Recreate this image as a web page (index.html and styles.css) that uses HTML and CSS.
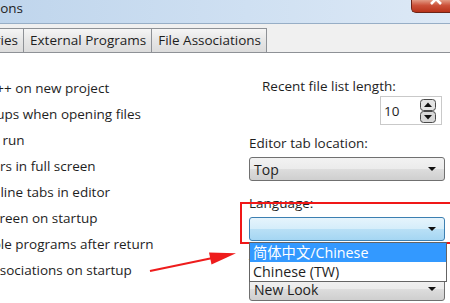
FILE: index.html
```html
<!DOCTYPE html>
<html lang="en">
<head>
    <meta charset="UTF-8">
    <title>Environment Options</title>
    <link rel="stylesheet" href="styles.css">
</head>
<body>

    <div class="window">
        <div class="titlebar">
            <div class="title"><span>Environment Options</span></div>
            <div class="close">
                <svg width="38" height="12" viewBox="0 0 38 12">
                    <path d="M19 -6 L29 4 M29 -6 L19 4" stroke="#fff" stroke-width="2.6" fill="none"/>
                </svg>
            </div>
        </div>

        <div class="tabs">
            <div class="tab-clip"><div class="tab">Directories</div></div>
            <div class="tab">External Programs</div>
            <div class="tab">File Associations</div>
        </div>

        <div class="page">
            <!-- левая колонка с флажками (обрезана скриншотом) -->
            <div class="checks">
                <ul>
                    <li>Default to C++ on new project</li>
                    <li>Create backups when opening files</li>
                    <li>Minimize on run</li>
                    <li>Show toolbars in full screen</li>
                    <li>Enable multiline tabs in editor</li>
                    <li class="wide">Show splash screen on startup</li>
                    <li>Pause console programs after return</li>
                    <li>Check file associations on startup</li>
                </ul>
            </div>

            <div class="side">
                <div class="label indent">Recent file list length:</div>
                <div class="spin">
                    <span>10</span>
                    <svg class="spin-btns" width="16" height="24" viewBox="0 0 16 24">
                        <rect x="0.5" y="0.5" width="15" height="11" rx="3" fill="#e4e4e4" stroke="#4a4a4a"/>
                        <rect x="0.5" y="12.5" width="15" height="11" rx="3" fill="#d8d8d8" stroke="#4a4a4a"/>
                        <path d="M4 8 L8 3.5 L12 8 Z" fill="#111"/>
                        <path d="M4 16 L8 20.5 L12 16 Z" fill="#111"/>
                    </svg>
                </div>

                <div class="label gap">Editor tab location:</div>
                <div class="combo">
                    <span>Top</span>
                    <i class="caret"></i>
                </div>

                <div class="label gap-big">Language:</div>
                <div class="combo-wrap">
                    <div class="combo active">
                        <span></span>
                        <i class="caret"></i>
                    </div>
                    <ul class="droplist">
                        <li class="selected">简体中文/Chinese</li>
                        <li>Chinese (TW)</li>
                    </ul>
                </div>

                <div class="label gap-big">Theme:</div>
                <div class="combo">
                    <span>New Look</span>
                    <i class="caret"></i>
                </div>
            </div>
        </div>
    </div>

    <!-- красная рамка и стрелка поверх окна -->
    <div class="callout"></div>
    <svg class="arrow" width="450" height="303" viewBox="0 0 450 303">
        <line x1="150" y1="271" x2="215" y2="257.5" stroke="#ee1c1c" stroke-width="2.2"/>
        <path d="M236 253.2 L209 252.5 L211.5 264.5 Z" fill="#ee1c1c"/>
    </svg>

</body>
</html>
```

FILE: styles.css
```css
body {
    margin: 0;
    padding: 0;
    width: 450px;
    height: 303px;
    overflow: hidden;
    position: relative;
    font-family: "Open Sans", "Noto Sans", sans-serif;
    font-size: 13.5px;
    color: #1e1e1e;
    background: #fff;
}

.window {
    display: flex;
    flex-direction: column;
    height: 303px;
    background: #f0f0f0;
}

/* Заголовок окна */
.titlebar {
    height: 23px;
    display: flex;
    align-items: flex-start;
    background: linear-gradient(to right, #bfd5ec, #cfe0f2 55%, #dde9f6);
    border-bottom: 1px solid #97aec6;
}

.title {
    width: 23px;
    display: flex;
    justify-content: flex-end;
    overflow: hidden;
    white-space: nowrap;
    line-height: 17px;
}

.close {
    margin-left: auto;
    width: 38px;
    height: 12px;
    border: 1px solid #6d2417;
    border-top: none;
    border-right: none;
    border-radius: 0 0 0 5px;
    background: linear-gradient(#e29a84, #cc523a 45%, #b8331a);
    overflow: hidden;
}

.close svg {
    display: block;
}

/* Вкладки */
.tabs {
    height: 28px;
    display: flex;
    align-items: flex-end;
}

.tab-clip {
    width: 23px;
    display: flex;
    justify-content: flex-end;
    overflow: hidden;
}

.tab {
    height: 23px;
    line-height: 23px;
    padding: 0 5px 0 6px;
    white-space: nowrap;
    background: linear-gradient(#f5f5f5, #e6e6e6 50%, #dcdcdc);
    border: 1px solid #8e9196;
    border-bottom: none;
    margin-right: -1px;
}

.page {
    flex: 1;
    display: flex;
    background: #fff;
    border-top: 1px solid #8e9196;
}

/* Флажки слева */
.checks {
    width: 249px;
    overflow: hidden;
    padding-top: 22px;
}

.checks ul {
    list-style: none;
    margin: 0 0 0 -78px;
    padding: 0;
    white-space: nowrap;
}

.checks li {
    height: 26px;
    line-height: 26px;
}

.checks li.wide {
    text-indent: -17px; /* в оригинале надпись шире */
}

/* Правая колонка */
.side {
    width: 196px;
    padding-top: 25px;
}

.label {
    line-height: 16px;
    white-space: nowrap;
}

.indent {
    padding-left: 13px;
}

.gap {
    margin-top: 10px;
}

.gap-big {
    margin-top: 14px;
}

.spin {
    margin: 2px 0 0 131px;
    width: 57px;
    height: 27px;
    border: 1px solid #c9c9c9;
    display: flex;
    align-items: center;
    justify-content: space-between;
    padding-left: 3px;
}

.spin-btns {
    margin-right: 5px;
}

.combo {
    margin-top: 6px;
    height: 22px;
    border: 1px solid #707070;
    border-radius: 3px;
    background: linear-gradient(#f2f2f2, #ebebeb 50%, #dddddd 51%, #cfcfcf);
    display: flex;
    align-items: center;
    justify-content: space-between;
    padding: 0 8px 0 4px;
    font-size: 14px;
}

.combo.active {
    border-color: #3c7fb1;
    background: linear-gradient(#e6f4fc, #d4edfa 50%, #b9e0f6 51%, #a5d6f3);
}

.caret {
    width: 0;
    height: 0;
    border-left: 4px solid transparent;
    border-right: 4px solid transparent;
    border-top: 4px solid #111;
}

.combo-wrap {
    position: relative;
}

.droplist {
    position: absolute;
    top: 25px;
    left: 0;
    width: 196px;
    margin: 0;
    padding: 0;
    list-style: none;
    background: #fff;
    border: 1px solid #646464;
    font-size: 14.3px;
    font-family: "Open Sans", "Noto Sans CJK SC", sans-serif;
    z-index: 10;
}

.droplist li {
    height: 19px;
    line-height: 19px;
    padding-left: 3px;
}

.droplist .selected {
    background: #3399ff;
    color: #fff;
}

/* Пометки поверх скриншота */
.callout {
    position: absolute;
    left: 240px;
    top: 202px;
    width: 230px;
    height: 38px;
    border: 2px solid #f01818;
    z-index: 5;
}

.arrow {
    position: absolute;
    left: 0;
    top: 0;
    z-index: 20;
}
```
